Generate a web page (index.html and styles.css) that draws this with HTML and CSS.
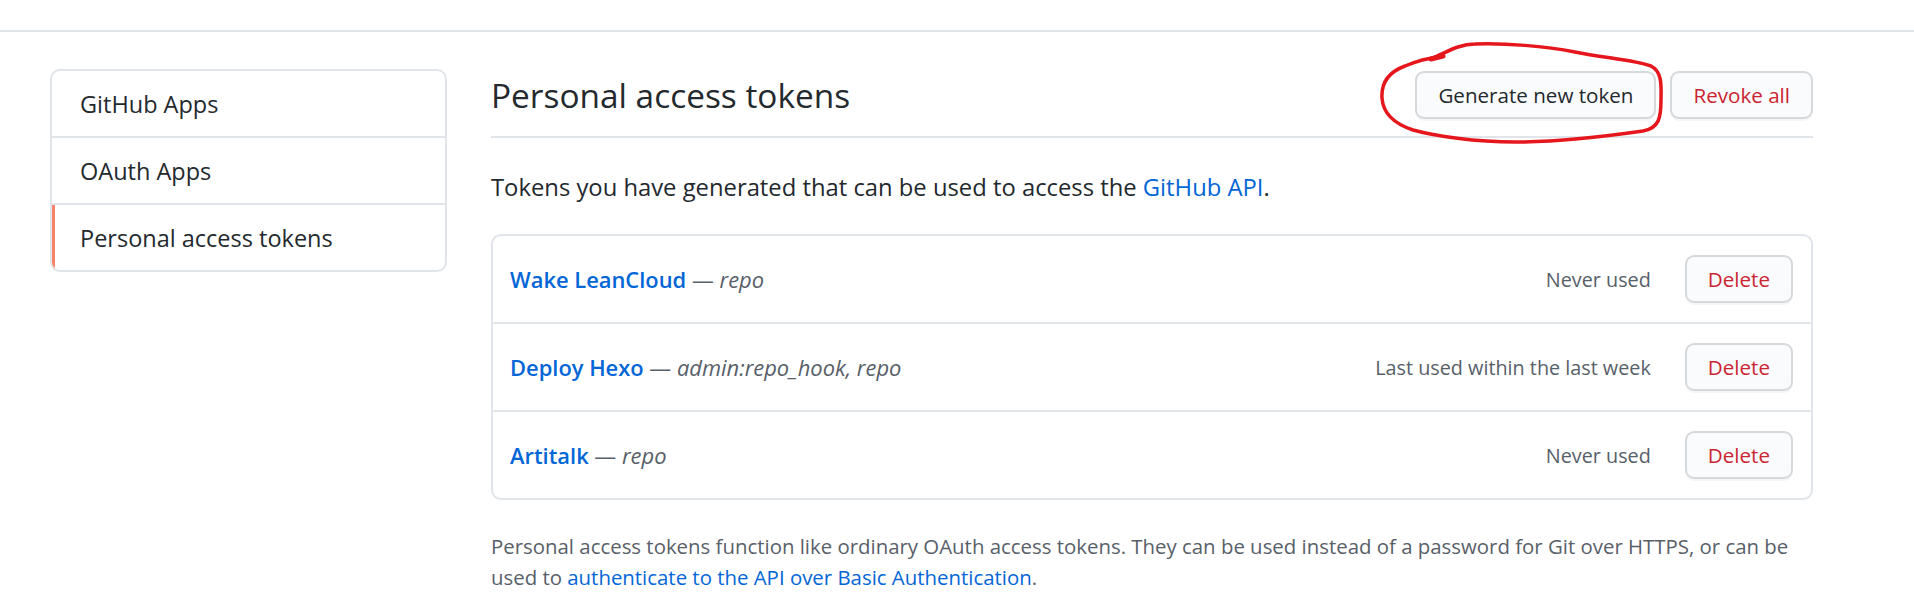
FILE: index.html
```html
<!DOCTYPE html>
<html lang="en">
<head>
<meta charset="utf-8">
<title>Personal access tokens</title>
<link rel="stylesheet" href="styles.css">
</head>
<body>
<div class="topbar"></div>
<div class="layout">
  <nav class="menu">
    <a class="menu-item" href="#">GitHub Apps</a>
    <a class="menu-item" href="#">OAuth Apps</a>
    <a class="menu-item selected" href="#">Personal access tokens</a>
  </nav>
  <main class="main">
    <div class="subhead">
      <h2 class="subhead-heading">Personal access tokens</h2>
      <div class="subhead-actions">
        <span class="annot-wrap">
          <a class="btn" href="#">Generate new token</a>
          <svg class="annot" width="292" height="110" viewBox="0 0 292 110">
            <path d="M58,20 C72,14 84,6 100,6 C130,5 170,8 200,14 C230,20 260,22 276,28 C288,34 286,50 286,62 C286,80 284,90 268,93 C240,97 190,104 140,104 C100,104 60,98 38,92 C20,86 8,76 7,60 C6,44 14,34 30,28 C42,23 54,20 64,19" fill="none" stroke="#e5161c" stroke-width="3.5" stroke-linecap="round" stroke-linejoin="round"/>
            <path d="M56,21 L68,18" stroke="#e5161c" stroke-width="5" stroke-linecap="round"/>
          </svg>
        </span>
        <a class="btn btn-danger" href="#">Revoke all</a>
      </div>
    </div>
    <p class="intro">Tokens you have generated that can be used to access the <a href="#">GitHub API</a>.</p>
    <div class="box">
      <div class="row">
        <span class="token-desc"><a class="token-name" href="#">Wake LeanCloud</a> — <em>repo</em></span>
        <span class="last-used">Never used</span>
        <a class="btn btn-danger" href="#">Delete</a>
      </div>
      <div class="row">
        <span class="token-desc"><a class="token-name" href="#">Deploy Hexo</a> — <em>admin:repo_hook, repo</em></span>
        <span class="last-used">Last used within the last week</span>
        <a class="btn btn-danger" href="#">Delete</a>
      </div>
      <div class="row">
        <span class="token-desc"><a class="token-name" href="#">Artitalk</a> — <em>repo</em></span>
        <span class="last-used">Never used</span>
        <a class="btn btn-danger" href="#">Delete</a>
      </div>
    </div>
    <p class="note">Personal access tokens function like ordinary OAuth access tokens. They can be used instead of a password for Git over HTTPS, or can be<br>used to <a href="#">authenticate to the API over Basic Authentication</a>.</p>
  </main>
</div>
</body>
</html>
```
FILE: styles.css
```css
* { box-sizing: border-box; }

body {
  margin: 0;
  font-family: "Open Sans", "Noto Sans", sans-serif;
  color: #24292e;
  background: #fff;
}

a { text-decoration: none; color: #0366d6; }

.topbar {
  height: 32px;
  border-bottom: 2px solid #e1e4e8;
}

.layout {
  display: flex;
  align-items: flex-start;
  gap: 44px;
  padding: 37px 0 0 50px;
}

.menu {
  width: 397px;
  border: 2px solid #e1e4e8;
  border-radius: 10px;
  display: flex;
  flex-direction: column;
  overflow: hidden;
}

.menu-item {
  position: relative;
  height: 67px;
  padding-left: 28px;
  display: flex;
  align-items: center;
  border-top: 2px solid #e1e4e8;
  font-size: 23.5px;
  color: #24292e;
}

.menu-item:first-child {
  border-top: 0;
  height: 65px;
}

.menu-item.selected::before {
  content: "";
  position: absolute;
  left: 0;
  top: 0;
  bottom: 0;
  width: 3px;
  background: #f9826c;
}

.main {
  width: 1322px;
}

.subhead {
  display: flex;
  align-items: center;
  padding: 2px 0 17px;
  border-bottom: 2px solid #e1e4e8;
}

.subhead-heading {
  flex: 1;
  margin: 0;
  font-size: 33.4px;
  font-weight: 400;
  line-height: 48px;
  color: #24292e;
}

.subhead-actions {
  display: flex;
  gap: 14px;
}

.annot-wrap {
  position: relative;
  display: flex;
}

.annot {
  position: absolute;
  left: -40px;
  top: -33px;
  pointer-events: none;
}

.btn {
  display: inline-flex;
  align-items: center;
  justify-content: center;
  height: 48px;
  padding: 0 21px;
  border: 2px solid #d6d9dc;
  border-radius: 9px;
  background: #fafbfc;
  box-shadow: 0 2px 0 rgba(27, 31, 35, 0.04);
  font-size: 20.6px;
  font-weight: 500;
  color: #24292e;
  white-space: nowrap;
}

.btn-danger { color: #cb2431; }

.intro {
  margin: 33px 0 30px;
  font-size: 23.8px;
  line-height: 33px;
}

.box {
  border: 2px solid #e1e4e8;
  border-radius: 10px;
}

.row {
  display: flex;
  align-items: center;
  height: 88px;
  padding: 0 18px 0 17px;
  border-top: 2px solid #e1e4e8;
}

.row:first-child {
  border-top: 0;
  height: 86px;
}

.token-desc {
  flex: 1;
  font-size: 21.9px;
  color: #586069;
}

.token-name {
  font-weight: 600;
  color: #0366d6;
}

.token-desc em { color: #586069; }

.last-used {
  margin-right: 34px;
  font-size: 19.8px;
  color: #586069;
}

.note {
  margin: 31px 0 0;
  font-size: 20.4px;
  line-height: 31px;
  color: #586069;
}
```
